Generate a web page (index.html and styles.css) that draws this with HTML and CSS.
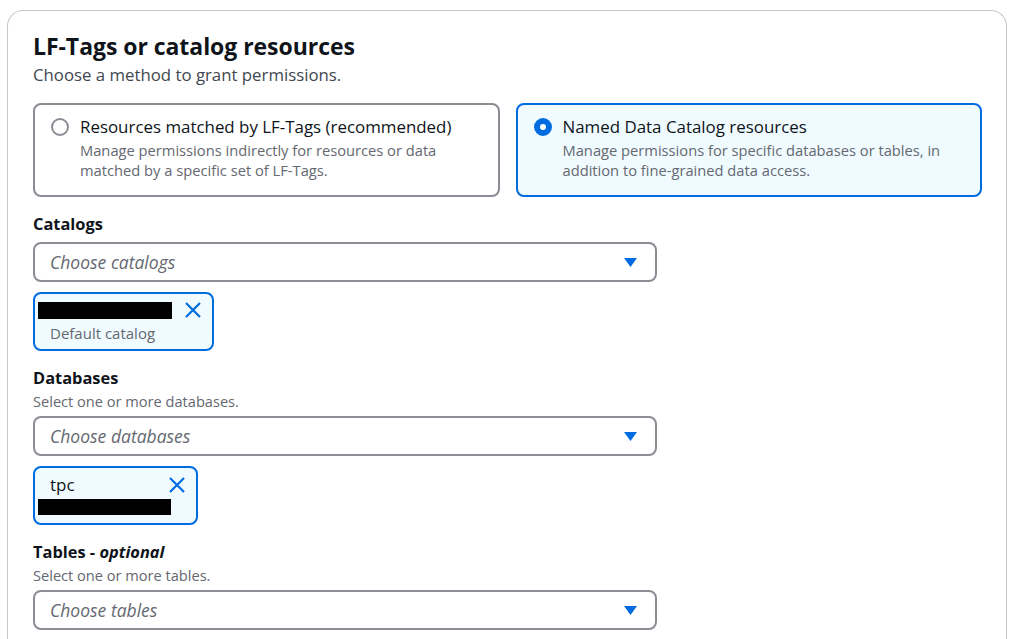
FILE: index.html
```html
<!DOCTYPE html>
<html lang="en">
<head>
<meta charset="utf-8">
<title>LF-Tags or catalog resources</title>
<link rel="stylesheet" href="styles.css">
</head>
<body>
<div class="container">
  <h2 class="title">LF-Tags or catalog resources</h2>
  <p class="subtitle">Choose a method to grant permissions.</p>

  <div class="cards">
    <div class="card">
      <span class="radio"></span>
      <div class="card-text">
        <div class="card-title">Resources matched by LF-Tags (recommended)</div>
        <div class="card-desc">Manage permissions indirectly for resources or data matched by a specific set of LF-Tags.</div>
      </div>
    </div>
    <div class="card card-selected">
      <span class="radio radio-checked"></span>
      <div class="card-text">
        <div class="card-title">Named Data Catalog resources</div>
        <div class="card-desc">Manage permissions for specific databases or tables, in addition to fine-grained data access.</div>
      </div>
    </div>
  </div>

  <div class="field field-first">
    <div class="label">Catalogs</div>
    <div class="select">
      <span class="placeholder">Choose catalogs</span>
      <svg class="caret" width="13" height="9" viewBox="0 0 13 9"><path d="M0 0h13L6.5 9z" fill="#006ce0"/></svg>
    </div>
    <div class="token token-catalog">
      <div class="token-body">
        <div class="token-line"><span class="redact redact-top"></span></div>
        <div class="token-desc">Default catalog</div>
      </div>
      <svg class="dismiss" width="18" height="18" viewBox="0 0 18 18"><path d="M2 2l14 14M16 2L2 16" stroke="#006ce0" stroke-width="2.2" fill="none"/></svg>
    </div>
  </div>

  <div class="field">
    <div class="label">Databases</div>
    <div class="desc">Select one or more databases.</div>
    <div class="select">
      <span class="placeholder">Choose databases</span>
      <svg class="caret" width="13" height="9" viewBox="0 0 13 9"><path d="M0 0h13L6.5 9z" fill="#006ce0"/></svg>
    </div>
    <div class="token token-db">
      <div class="token-body">
        <div class="token-line">tpc</div>
        <span class="redact redact-bottom"></span>
      </div>
      <svg class="dismiss" width="18" height="18" viewBox="0 0 18 18"><path d="M2 2l14 14M16 2L2 16" stroke="#006ce0" stroke-width="2.2" fill="none"/></svg>
    </div>
  </div>

  <div class="field">
    <div class="label">Tables - <i>optional</i></div>
    <div class="desc">Select one or more tables.</div>
    <div class="select">
      <span class="placeholder">Choose tables</span>
      <svg class="caret" width="13" height="9" viewBox="0 0 13 9"><path d="M0 0h13L6.5 9z" fill="#006ce0"/></svg>
    </div>
  </div>
</div>
</body>
</html>
```

FILE: styles.css
```css
html, body {
  margin: 0;
  padding: 0;
  background: #ffffff;
}

body {
  padding: 10px 12px 0 7px;
  font-family: "Open Sans", "Noto Sans", sans-serif;
  color: #0f141a;
  overflow: hidden;
}

.container {
  border: 1px solid #c6c6cd;
  border-bottom: none;
  border-radius: 16px 16px 0 0;
  padding: 22px 24px 40px 25px;
  min-height: 700px;
}

.title {
  margin: 0;
  font-size: 23px;
  line-height: 26px;
  font-weight: 700;
  letter-spacing: -0.05px;
}

.subtitle {
  margin: 5px 0 0;
  font-size: 16.8px;
  line-height: 22px;
  color: #414750;
}

.cards {
  display: grid;
  grid-template-columns: 1fr 1fr;
  gap: 16px;
  margin-top: 17px;
}

.card {
  display: flex;
  align-items: flex-start;
  gap: 11px;
  height: 94px;
  box-sizing: border-box;
  border: 2px solid #8c8c94;
  border-radius: 8px;
  padding: 10px 16px 12px 16px;
}

.card-selected {
  border-color: #006ce0;
  background: #f0fbff;
}

.radio {
  flex: none;
  width: 18px;
  height: 18px;
  box-sizing: border-box;
  border: 2px solid #8c8c94;
  border-radius: 50%;
  margin-top: 3px;
  background: #ffffff;
}

.radio-checked {
  border: 6px solid #006ce0;
}

.card-title {
  font-size: 16.9px;
  line-height: 24px;
}

.card-desc {
  margin-top: 1px;
  font-size: 14.7px;
  line-height: 20px;
  color: #656871;
}

.field {
  margin-top: 16px;
  width: 624px;
}

.label {
  font-size: 16.4px;
  line-height: 22px;
  font-weight: 700;
}

.desc {
  margin-top: 2px;
  font-size: 14.6px;
  line-height: 20px;
  color: #656871;
}

.select {
  margin-top: 5px;
  height: 40px;
  box-sizing: border-box;
  border: 2px solid #8c8c94;
  border-radius: 8px;
  display: flex;
  align-items: center;
  justify-content: space-between;
  padding: 0 18px 0 15px;
}

.field-first .select {
  margin-top: 7px;
}

.placeholder {
  font-style: italic;
  font-size: 17.5px;
  color: #656871;
}

.caret {
  display: block;
}

.token {
  margin-top: 10px;
  display: inline-flex;
  align-items: flex-start;
  gap: 6px;
  border: 2px solid #006ce0;
  border-radius: 8px;
  background: #f0fbff;
  height: 59px;
  box-sizing: border-box;
  padding: 5px 10px 0 15px;
}

.token-body {
  display: flex;
  flex-direction: column;
}

.token-catalog .token-body {
  width: 128px;
}

.token-db .token-body {
  width: 112px;
}

.token-db {
  padding-top: 6px;
}

.token-line {
  height: 22px;
  line-height: 22px;
  font-size: 17px;
  display: flex;
  align-items: center;
}

.token-desc {
  margin-top: 2px;
  font-size: 15px;
  line-height: 20px;
  color: #656871;
}

.redact {
  display: block;
  background: #000000;
  margin-left: -12px;
}

.redact-top {
  width: 134px;
  height: 17px;
}

.redact-bottom {
  width: 133px;
  height: 16px;
  margin-top: 3px;
}

.dismiss {
  display: block;
  margin-top: 2px;
  flex: none;
}
```
